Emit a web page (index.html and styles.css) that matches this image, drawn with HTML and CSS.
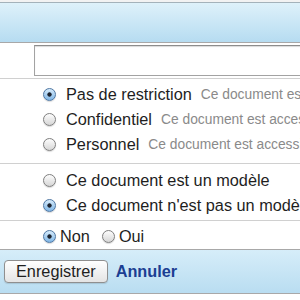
FILE: index.html
```html
<!DOCTYPE html>
<html lang="fr">
<head>
    <meta charset="UTF-8">
    <title>Propriétés du document</title>
    <link rel="stylesheet" href="styles.css">
</head>
<body>
    <div class="top-strip"></div>
    <div class="panel-header"></div>

    <div class="section field-row">
        <input type="text" class="text-field">
    </div>

    <div class="section group-access">
        <label class="radio-row">
            <input type="radio" name="access" checked>
            <span class="label">Pas de restriction</span>
            <span class="hint">Ce document est accessible à tous</span>
        </label>
        <label class="radio-row">
            <input type="radio" name="access">
            <span class="label">Confidentiel</span>
            <span class="hint">Ce document est accessible aux membres</span>
        </label>
        <label class="radio-row">
            <input type="radio" name="access">
            <span class="label">Personnel</span>
            <span class="hint">Ce document est accessible à vous seul</span>
        </label>
    </div>

    <div class="section group-model">
        <label class="radio-row">
            <input type="radio" name="model">
            <span class="label">Ce document est un modèle</span>
        </label>
        <label class="radio-row">
            <input type="radio" name="model" checked>
            <span class="label">Ce document n'est pas un modèle</span>
        </label>
    </div>

    <div class="section group-yesno">
        <label class="radio-row inline">
            <input type="radio" name="yesno" checked>
            <span class="label">Non</span>
        </label>
        <label class="radio-row inline">
            <input type="radio" name="yesno">
            <span class="label">Oui</span>
        </label>
    </div>

    <div class="panel-footer">
        <button class="save-button">Enregistrer</button>
        <a href="#" class="cancel-link">Annuler</a>
    </div>
</body>
</html>
```

FILE: styles.css
```css
body {
    margin: 0;
    width: 300px;
    height: 300px;
    overflow: hidden;
    background: #fff;
    font-family: "Liberation Sans", Arial, sans-serif;
    font-size: 16.3px;
    color: #1e1e1e;
}

.top-strip {
    height: 2px;
    background: #f2f2f2;
}

.panel-header {
    height: 39px;
    border-top: 1px solid #a4b2ba;
    border-bottom: 1px solid #a8a8a8;
    background: linear-gradient(to bottom, #def1fa, #b6dcf1);
}

.section {
    border-bottom: 1px solid #d0d0d0;
    white-space: nowrap;
}

.field-row {
    padding: 2px 0 2px 34px;
}

.text-field {
    display: block;
    box-sizing: border-box;
    width: 290px;
    height: 31px;
    margin: 0;
    border: 1px solid #a3a3a3;
    border-top-color: #8c8c8c;
    box-shadow: inset 0 1px 1px rgba(0,0,0,0.15);
    background: #fff;
}

.group-access {
    padding: 3px 0 6px;
}

.group-model {
    padding: 4px 0 2px;
}

.group-yesno {
    display: flex;
    padding: 3px 0 0;
    border-bottom: none;
}

.radio-row {
    display: flex;
    align-items: center;
    height: 25px;
    padding-left: 43px;
}

.radio-row input {
    -webkit-appearance: none;
    appearance: none;
    flex: none;
    width: 13px;
    height: 13px;
    margin: 0 10px 0 0;
    border: 1px solid #7f7f7f;
    border-radius: 50%;
    background: linear-gradient(to bottom, #fdfdfd, #d6d6d6);
    box-shadow: 0 1px 1px rgba(0,0,0,0.15);
}

.radio-row input:checked {
    border-color: #4f77a3;
    background:
        radial-gradient(circle, #1d2430 0, #1d2430 1.8px, transparent 2.5px),
        linear-gradient(to bottom, #d6ebfb, #80b6e6);
}

.radio-row.inline + .radio-row.inline {
    padding-left: 12px;
}

.radio-row.inline input {
    margin-right: 4px;
}

.hint {
    margin-left: 9px;
    font-size: 13.8px;
    color: #8a8a8a;
}

.panel-footer {
    display: flex;
    align-items: center;
    gap: 8px;
    height: 43px;
    padding-left: 4px;
    border-top: 1px solid #a8a8a8;
    border-bottom: 1px solid #a8a8a8;
    background: linear-gradient(to bottom, #d6edf9, #b9ddf1);
}

.save-button {
    height: 23px;
    padding: 0 11px;
    font-family: inherit;
    font-size: 16.3px;
    color: #1e1e1e;
    border: 1px solid #8f8f8f;
    border-radius: 4px;
    background: linear-gradient(to bottom, #ffffff, #e4e4e4);
    box-shadow: 0 1px 1px rgba(0,0,0,0.12);
}

.cancel-link {
    font-weight: bold;
    color: #1b3e92;
    text-decoration: none;
}
```
